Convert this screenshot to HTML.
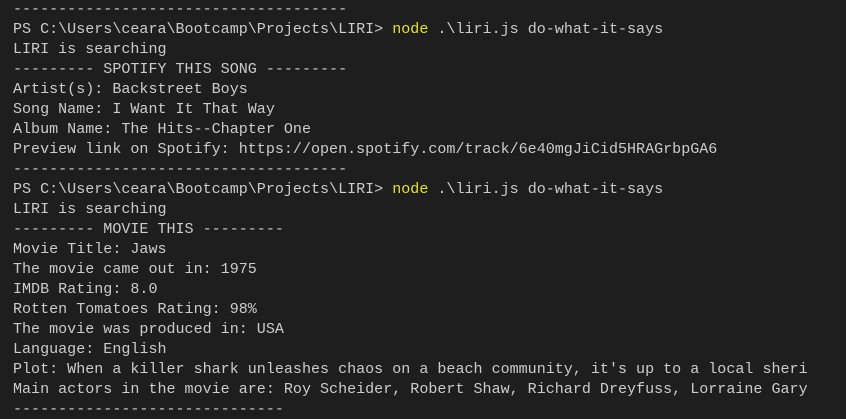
<!DOCTYPE html>
<html><head><style>
html,body{margin:0;padding:0;background:#1e1e1e;width:846px;height:415px;overflow:hidden}
pre{margin:0;position:absolute;left:13px;top:-1px;font-family:"Liberation Mono",monospace;font-size:15.05px;line-height:20px;color:#cccccc;white-space:pre}
.y{color:#e5e510}
</style></head><body>
<pre>-------------------------------------
PS C:\Users\ceara\Bootcamp\Projects\LIRI&gt; <span class="y">node</span> .\liri.js do-what-it-says
LIRI is searching
--------- SPOTIFY THIS SONG ---------
Artist(s): Backstreet Boys
Song Name: I Want It That Way
Album Name: The Hits--Chapter One
Preview link on Spotify: https://open.spotify.com/track/6e40mgJiCid5HRAGrbpGA6
-------------------------------------
PS C:\Users\ceara\Bootcamp\Projects\LIRI&gt; <span class="y">node</span> .\liri.js do-what-it-says
LIRI is searching
--------- MOVIE THIS ---------
Movie Title: Jaws
The movie came out in: 1975
IMDB Rating: 8.0
Rotten Tomatoes Rating: 98%
The movie was produced in: USA
Language: English
Plot: When a killer shark unleashes chaos on a beach community, it's up to a local sheri
Main actors in the movie are: Roy Scheider, Robert Shaw, Richard Dreyfuss, Lorraine Gary
------------------------------</pre>
</body></html>
